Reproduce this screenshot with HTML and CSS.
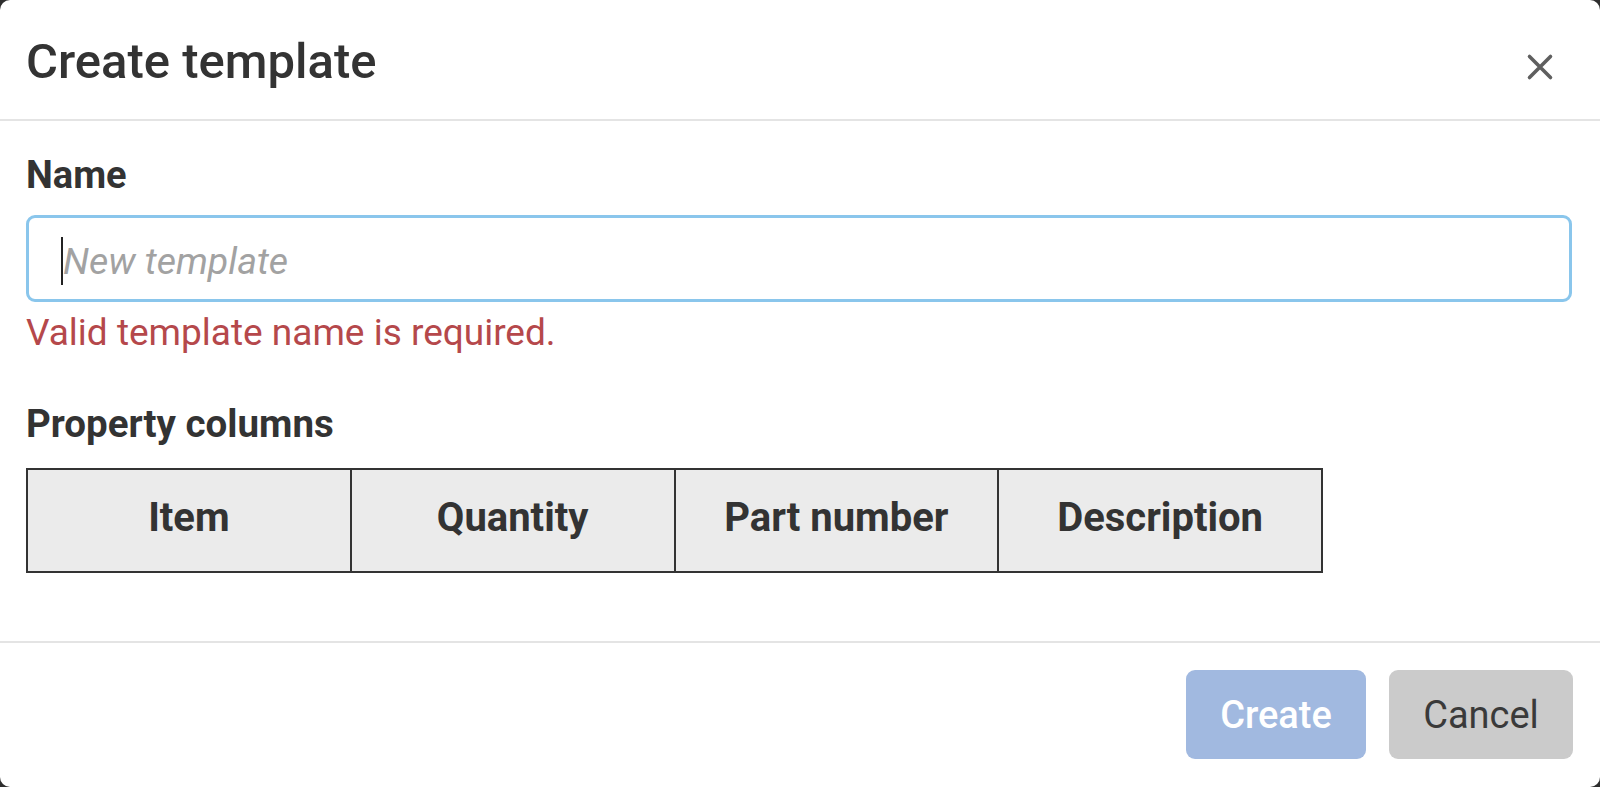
FILE: index.html
```html
<!DOCTYPE html>
<html>
<head>
<meta charset="utf-8">
<link rel="stylesheet" href="styles.css">
</head>
<body>
<div class="dialog">
  <div class="header">
    <h1 class="title">Create template</h1>
    <button class="close" aria-label="Close">
      <svg width="28" height="28" viewBox="0 0 28 28"><path d="M3.5 3.5 L24.5 24.5 M24.5 3.5 L3.5 24.5" stroke="#5f5f5f" stroke-width="3.6" stroke-linecap="round"/></svg>
    </button>
  </div>
  <div class="body">
    <div class="label">Name</div>
    <div class="input"><span class="caret"></span><span class="placeholder">New template</span></div>
    <div class="error">Valid template name is required.</div>
    <div class="label label-cols">Property columns</div>
    <table class="cols">
      <tr><th>Item</th><th>Quantity</th><th>Part number</th><th>Description</th></tr>
    </table>
  </div>
  <div class="footer">
    <button class="btn btn-create">Create</button>
    <button class="btn btn-cancel">Cancel</button>
  </div>
</div>
</body>
</html>
```
FILE: styles.css
```css
html, body {
  margin: 0;
  padding: 0;
  background: #2e2e2e;
}
body {
  font-family: Roboto, "Noto Sans", sans-serif;
  color: #333;
}
.dialog {
  width: 1600px;
  height: 787px;
  background: #fff;
  border-radius: 10px;
  display: flex;
  flex-direction: column;
  overflow: hidden;
}
.header {
  height: 121px;
  border-bottom: 2px solid #e4e4e4;
  display: flex;
  align-items: center;
  justify-content: space-between;
  padding: 0 46px 0 26px;
  box-sizing: border-box;
  flex: none;
}
.title {
  margin: 0;
  font-size: 49px;
  font-weight: 500;
  color: #333;
  line-height: 1;
  padding-top: 4px;
}
.close {
  border: none;
  background: none;
  padding: 0;
  margin-top: 14px;
  width: 28px;
  height: 28px;
  display: flex;
}
.body {
  flex: 1;
  padding: 32px 28px 0 26px;
  border-bottom: 2px solid #e4e4e4;
}
.label {
  font-size: 38px;
  font-weight: 700;
  line-height: 44px;
  color: #333;
}
.label-cols {
  font-size: 38.5px;
  margin-top: 45px;
}
.input {
  margin-top: 18px;
  height: 87px;
  box-sizing: border-box;
  border: 3px solid #8ac6ec;
  border-radius: 9px;
  display: flex;
  align-items: center;
  padding-left: 32px;
}
.caret {
  width: 2px;
  height: 48px;
  background: #222;
  margin-top: 4px;
}
.placeholder {
  font-size: 37.5px;
  font-style: italic;
  color: #a2a2a2;
  margin-top: 4px;
}
.error {
  color: #b5484b;
  font-size: 37px;
  line-height: 48px;
  margin-top: 7px;
}
.cols {
  margin-top: 22px;
  border-collapse: collapse;
  width: 1297px;
  height: 105px;
}
.cols th {
  border: 2px solid #333;
  background: #ebebeb;
  font-size: 40px;
  font-weight: 700;
  width: 25%;
  padding: 0 0 6px;
  color: #333;
}
.footer {
  height: 144px;
  flex: none;
  display: flex;
  justify-content: flex-end;
  align-items: flex-start;
  padding: 27px 27px 0 0;
  box-sizing: border-box;
  gap: 23px;
}
.btn {
  height: 89px;
  border: none;
  border-radius: 9px;
  font-family: Roboto, "Noto Sans", sans-serif;
  font-size: 38px;
  padding: 0;
}
.btn-create {
  width: 180px;
  background: #a1b9e0;
  color: #fff;
  font-weight: 500;
}
.btn-cancel {
  width: 184px;
  background: #cbcbcb;
  color: #3a3a3a;
  font-weight: 400;
}
```
